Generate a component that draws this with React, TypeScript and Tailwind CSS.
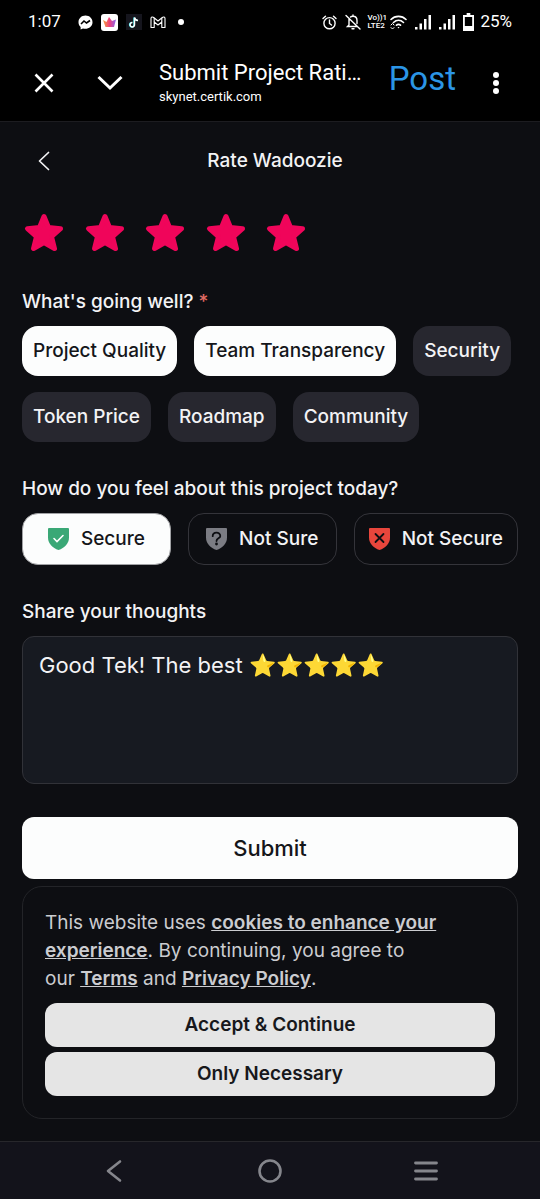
import React, { useState } from "react";

interface ShieldProps {
  kind: "secure" | "unsure" | "insecure";
}

const ShieldIcon: React.FC<ShieldProps> = ({ kind }) => {
  const fill = { secure: "#3aa876", unsure: "#7b7c83", insecure: "#e8463c" }[kind];
  return (
    <svg width="21" height="22" viewBox="0 0 21 22" fill="none" className="shrink-0" aria-hidden="true">
      <path d="M1 0H20Q21 0 21 1V9.500C21 15.500 16.500 20 10.500 22C4.500 20 0 15.500 0 9.500V1Q0 0 1 0Z" fill={fill} />
      {kind === "secure" && <path d="M6 10.500L9 13.500L15 7.500" stroke="#fff" strokeWidth="1.600" strokeLinecap="round" />}
      {kind === "unsure" && (
        <>
          <path d="M6.700 8.200C6.700 3.500 14.300 3.500 14.300 7.900C14.300 10.500 10.500 10.200 10.500 13" stroke="#0d0e12" strokeWidth="1.800" strokeLinecap="round" />
          <circle cx="10.500" cy="16" r="1.400" fill="#0d0e12" />
        </>
      )}
      {kind === "insecure" && <path d="M6.500 6L14.500 14M14.500 6L6.500 14" stroke="#0d0e12" strokeWidth="1.800" strokeLinecap="round" />}
    </svg>
  );
};

const SignalIcon: React.FC = () => (
  <svg width="16" height="15" viewBox="0 0 16 15" fill="#fff" aria-hidden="true">
    <rect x="0" y="12" width="2.500" height="2.500" />
    <rect x="4.500" y="8.500" width="2.500" height="6" />
    <rect x="9" y="4" width="2.500" height="10.500" />
    <rect x="13.500" y="0" width="2.500" height="14.500" />
  </svg>
);

const StatusBar: React.FC = () => (
  <div className="flex h-11 items-center justify-between px-7 font-[Roboto,sans-serif] text-white">
    <div className="flex items-center">
      <span className="w-[50px] text-[17px]">1:07</span>
      <div className="flex items-center gap-2">
        <svg width="15" height="15" viewBox="0 0 15 15" aria-label="Messenger">
          <path d="M7.500 0.500C3.500 0.500 0.500 3.400 0.500 7.200C0.500 9.200 1.300 10.900 2.600 12V14.500L5 13.500C9.800 14.800 14.500 11.800 14.500 7.200C14.500 3.400 11.500 0.500 7.500 0.500Z" fill="#fff" />
          <path d="M3 9L6 6L8.500 8L12 5.500" stroke="#000" strokeWidth="1.600" fill="none" />
        </svg>
        <svg width="17" height="17" viewBox="0 0 17 17" aria-label="Crown app">
          <defs>
            <linearGradient id="crown" x1="0" x2="1">
              <stop offset="0" stopColor="#f6a23a" />
              <stop offset="0.500" stopColor="#f0427a" />
              <stop offset="1" stopColor="#8a62f0" />
            </linearGradient>
          </defs>
          <rect width="17" height="17" rx="3" fill="#fff" />
          <path d="M2 6L5.500 8L8 3L11 7L15 5.500L13 13H4.500Z" fill="url(#crown)" />
        </svg>
        <svg width="16" height="16" viewBox="0 0 16 16" fill="none" aria-label="TikTok">
          <rect width="16" height="16" fill="#15151d" />
          <path d="M8 3.500V10.500A2.200 2.200 0 1 1 6 8.500M8 3.500C8.500 5.500 9.500 6.300 11.500 6.500" stroke="#25d9e0" strokeWidth="1.500" />
          <path d="M8.500 3.500V10.500A2.200 2.200 0 1 1 6.500 8.500M8.500 3.500C9 5.500 10 6.300 12 6.500" stroke="#fff" strokeWidth="1.500" />
        </svg>
        <svg width="16" height="13" viewBox="0 0 16 13" fill="none" stroke="#fff" strokeWidth="1.100" strokeLinejoin="round" aria-label="Gmail">
          <path d="M1 11.500V2.500C1 1 2.500 0.500 3.700 1.500L8 5L12.300 1.500C13.500 0.500 15 1 15 2.500V11.500H11.800V6L8 9L4.200 6V11.500Z" />
          <path d="M4.200 6V2M11.800 6V2" />
        </svg>
        <span className="ml-1 size-1.5 rounded-full bg-white" />
      </div>
    </div>
    <div className="flex items-center">
      <svg width="15" height="15" viewBox="0 0 15 15" fill="none" stroke="#fff" strokeWidth="1.400" strokeLinecap="round" aria-label="Alarm">
        <circle cx="7.500" cy="8.200" r="5.600" />
        <path d="M7.500 5V8.500L9.500 10M1 3.500L3.500 1.200M14 3.500L11.500 1.200" />
      </svg>
      <svg width="16" height="16" viewBox="0 0 16 16" fill="none" stroke="#fff" strokeWidth="1.400" strokeLinecap="round" className="ml-2" aria-label="Silent">
        <path d="M1 1.500L15 15M4 5V11L2.500 12.500H12.500M5.500 3C6 2.500 7 2.200 8 2.200C10.500 2.200 12 4 12 6.500V9.500M8 2V1M7 14.800H9" />
      </svg>
      <span className="ml-1.5 w-[19px] text-[8px] leading-[8px] font-medium whitespace-nowrap">
        Vo))1
        <br />
        LTE2
      </span>
      <svg width="17" height="15" viewBox="0 0 17 15" fill="none" stroke="#fff" strokeWidth="1.600" strokeLinecap="round" className="ml-1 mr-2" aria-label="Wi-Fi">
        <path d="M1 4.500C5 0.300 12 0.300 16 4.500M3.500 7.500C6.500 4.700 10.500 4.700 13.500 7.500M6.500 10.200C7.700 9.200 9.300 9.200 10.500 10.200" />
        <path d="M7.500 12H9.500L8.500 13.500Z" fill="#fff" stroke="none" />
        <path d="M1 10L2.500 8.500L4 10M1 12.500L2.500 14L4 12.500" strokeWidth="1" />
      </svg>
      <SignalIcon />
      <span className="w-2" />
      <SignalIcon />
      <svg width="11" height="18" viewBox="0 0 12 18" preserveAspectRatio="none" className="ml-2 mr-1.5" aria-label="Battery">
        <path d="M4 0H8V2H12V18H0V2H4Z" fill="#fff" />
        <rect x="2" y="4" width="8" height="9" fill="#000" />
      </svg>
      <span className="text-[17px]">25%</span>
    </div>
  </div>
);

const BrowserBar: React.FC = () => (
  <header className="flex h-[78px] items-center border-b border-[#1c1c20] px-8 font-[Roboto,sans-serif] text-white">
    <button type="button" aria-label="Close" className="w-[65px]">
      <svg width="24" height="24" viewBox="0 0 24 24" stroke="#fff" strokeWidth="2.600">
        <path d="M3.500 3.500L20.500 20.500M20.500 3.500L3.500 20.500" />
      </svg>
    </button>
    <button type="button" aria-label="Minimize" className="w-[62px]">
      <svg width="26" height="24" viewBox="0 0 26 24" fill="none" stroke="#fff" strokeWidth="3">
        <path d="M1.500 6L13 17L24.500 6" />
      </svg>
    </button>
    <div className="min-w-0 flex-1 whitespace-nowrap">
      <p className="text-[22px] leading-7">Submit Project Rati…</p>
      <p className="text-[13px] leading-5">skynet.certik.com</p>
    </div>
    <button type="button" className="ml-4 pb-2 text-[33px] leading-10 text-[#2b95e6]">
      Post
    </button>
    <button type="button" aria-label="More options" className="ml-8 pr-1">
      <svg width="16" height="24" viewBox="0 0 16 24" fill="#fff">
        <circle cx="8" cy="4" r="3" />
        <circle cx="8" cy="12" r="3" />
        <circle cx="8" cy="20" r="3" />
      </svg>
    </button>
  </header>
);

const topics = ["Project Quality", "Team Transparency", "Security", "Token Price", "Roadmap", "Community"];

const feelings: { kind: ShieldProps["kind"]; label: string }[] = [
  { kind: "secure", label: "Secure" },
  { kind: "unsure", label: "Not Sure" },
  { kind: "insecure", label: "Not Secure" },
];

const RatingForm: React.FC = () => {
  const [rating, setRating] = useState(5);
  const [picked, setPicked] = useState(["Project Quality", "Team Transparency"]);
  const [feeling, setFeeling] = useState("secure");
  const [thoughts, setThoughts] = useState("Good Tek! The best ⭐⭐⭐⭐⭐");

  const toggle = (topic: string) =>
    setPicked(picked.includes(topic) ? picked.filter((t) => t !== topic) : [...picked, topic]);

  return (
    <form onSubmit={(e) => e.preventDefault()}>
      <div className="flex w-[286px] justify-between pt-[11px]">
        {[1, 2, 3, 4, 5].map((n) => (
          <button key={n} type="button" aria-label={`${n} stars`} onClick={() => setRating(n)}>
            <svg width="44" height="44" viewBox="0 0 44 44">
              <path
                d="M22 5.500L26.500 16.500L38.500 17.700L29.500 25.500L32.500 37.500L22 31.500L11.500 37.500L14.500 25.500L5.500 17.700L17.500 16.500Z"
                fill={n <= rating ? "#f0055a" : "#2a2a32"}
                stroke={n <= rating ? "#f0055a" : "#2a2a32"}
                strokeWidth="5"
                strokeLinejoin="round"
              />
            </svg>
          </button>
        ))}
      </div>

      <h2 className="mt-[33px] text-[19px] leading-7 font-medium">
        What's going well? <span className="text-[#e06a62]">*</span>
      </h2>
      <div className="mt-2.5 flex flex-wrap gap-x-[17px] gap-y-4">
        {topics.map((topic) => (
          <button
            key={topic}
            type="button"
            aria-pressed={picked.includes(topic)}
            onClick={() => toggle(topic)}
            className={`h-[50px] rounded-2xl px-[11px] text-[19px] font-medium ${
              picked.includes(topic) ? "bg-[#fcfdfd] text-[#15161a]" : "bg-[#27272f] text-[#f3f3f5]"
            }`}
          >
            {topic}
          </button>
        ))}
      </div>

      <h2 className="mt-[33px] text-[19px] leading-7 font-medium">How do you feel about this project today?</h2>
      <div className="mt-2.5 grid grid-cols-[1fr_1fr_auto] gap-[17px]">
        {feelings.map(({ kind, label }) => (
          <button
            key={kind}
            type="button"
            aria-pressed={feeling === kind}
            onClick={() => setFeeling(kind)}
            className={`flex h-[52px] items-center justify-center gap-3 rounded-2xl border px-3.5 text-[19px] font-medium whitespace-nowrap ${
              feeling === kind ? "border-[#a0a1a4] bg-[#fcfdfd] text-[#15161a]" : "border-[#34343a] text-[#f3f3f5]"
            }`}
          >
            <ShieldIcon kind={kind} />
            {label}
          </button>
        ))}
      </div>

      <label htmlFor="thoughts" className="mt-[33px] block text-[19px] leading-7 font-medium">
        Share your thoughts
      </label>
      <textarea
        id="thoughts"
        value={thoughts}
        onChange={(e) => setThoughts(e.target.value)}
        className="mt-2.5 block h-[148px] w-full resize-none rounded-xl border border-[#313238] bg-[#171a21] px-4 py-3 text-[22px] leading-8 text-[#f3f3f5] outline-none"
      />

      <button type="submit" className="mt-[33px] h-[62px] w-full rounded-xl bg-[#fcfdfd] text-[22px] font-medium text-[#15161a]">
        Submit
      </button>
    </form>
  );
};

const CookieNotice: React.FC = () => (
  <section className="mt-[7px] rounded-[20px] border border-[#232428] p-[22px]">
    <p className="text-[19px] leading-7 text-[#cbccd0]">
      This website uses{" "}
      <a href="#cookies" className="font-semibold underline">cookies to enhance your experience</a>. By continuing, you agree to
      our&nbsp;<a href="#terms" className="font-semibold underline">Terms</a> and{" "}
      <a href="#privacy" className="font-semibold underline">Privacy Policy</a>.
    </p>
    <div className="mt-2.5 flex flex-col gap-[5px] text-[19px] font-semibold text-[#17181c]">
      <button type="button" className="h-11 rounded-xl bg-[#e5e5e5]">Accept &amp; Continue</button>
      <button type="button" className="h-11 rounded-xl bg-[#e5e5e5]">Only Necessary</button>
    </div>
  </section>
);

const SystemNav: React.FC = () => (
  <nav className="mt-auto grid h-[58px] grid-cols-3 items-center border-t border-[#27272b] bg-[#13131b] px-9">
    <button type="button" aria-label="Back" className="flex justify-center">
      <svg width="24" height="24" viewBox="0 0 24 24" fill="none" stroke="#85868c" strokeWidth="2.600" strokeLinecap="round" strokeLinejoin="round">
        <path d="M18 2.500L6 12L18 21.500" />
      </svg>
    </button>
    <button type="button" aria-label="Home" className="flex justify-center">
      <svg width="24" height="24" viewBox="0 0 24 24" fill="none" stroke="#85868c" strokeWidth="2.600">
        <circle cx="12" cy="12" r="10.500" />
      </svg>
    </button>
    <button type="button" aria-label="Recents" className="flex justify-center">
      <svg width="24" height="24" viewBox="0 0 24 24" stroke="#85868c" strokeWidth="2.800" strokeLinecap="round">
        <path d="M1.500 4H22.500M1.500 12H22.500M1.500 20H22.500" />
      </svg>
    </button>
  </nav>
);

const App: React.FC = () => {
  return (
    <div className="flex min-h-screen flex-col bg-[#0d0e12] font-[Inter,sans-serif] text-[#f3f3f5]">
      <div className="bg-black">
        <StatusBar />
        <BrowserBar />
      </div>
      <main className="px-[22px] pb-[22px]">
        <div className="flex h-[78px] items-center">
          <button type="button" aria-label="Go back" className="flex w-11 justify-center">
            <svg width="12" height="20" viewBox="0 0 12 20" fill="none" stroke="#f3f3f5" strokeWidth="1.700" strokeLinecap="round" strokeLinejoin="round">
              <path d="M10.500 1.500L1.500 10L10.500 18.500" />
            </svg>
          </button>
          <h1 className="flex-1 pr-[34px] text-center text-[19px] font-medium">Rate Wadoozie</h1>
        </div>
        <RatingForm />
        <CookieNotice />
      </main>
      <SystemNav />
    </div>
  );
};

export default App;
